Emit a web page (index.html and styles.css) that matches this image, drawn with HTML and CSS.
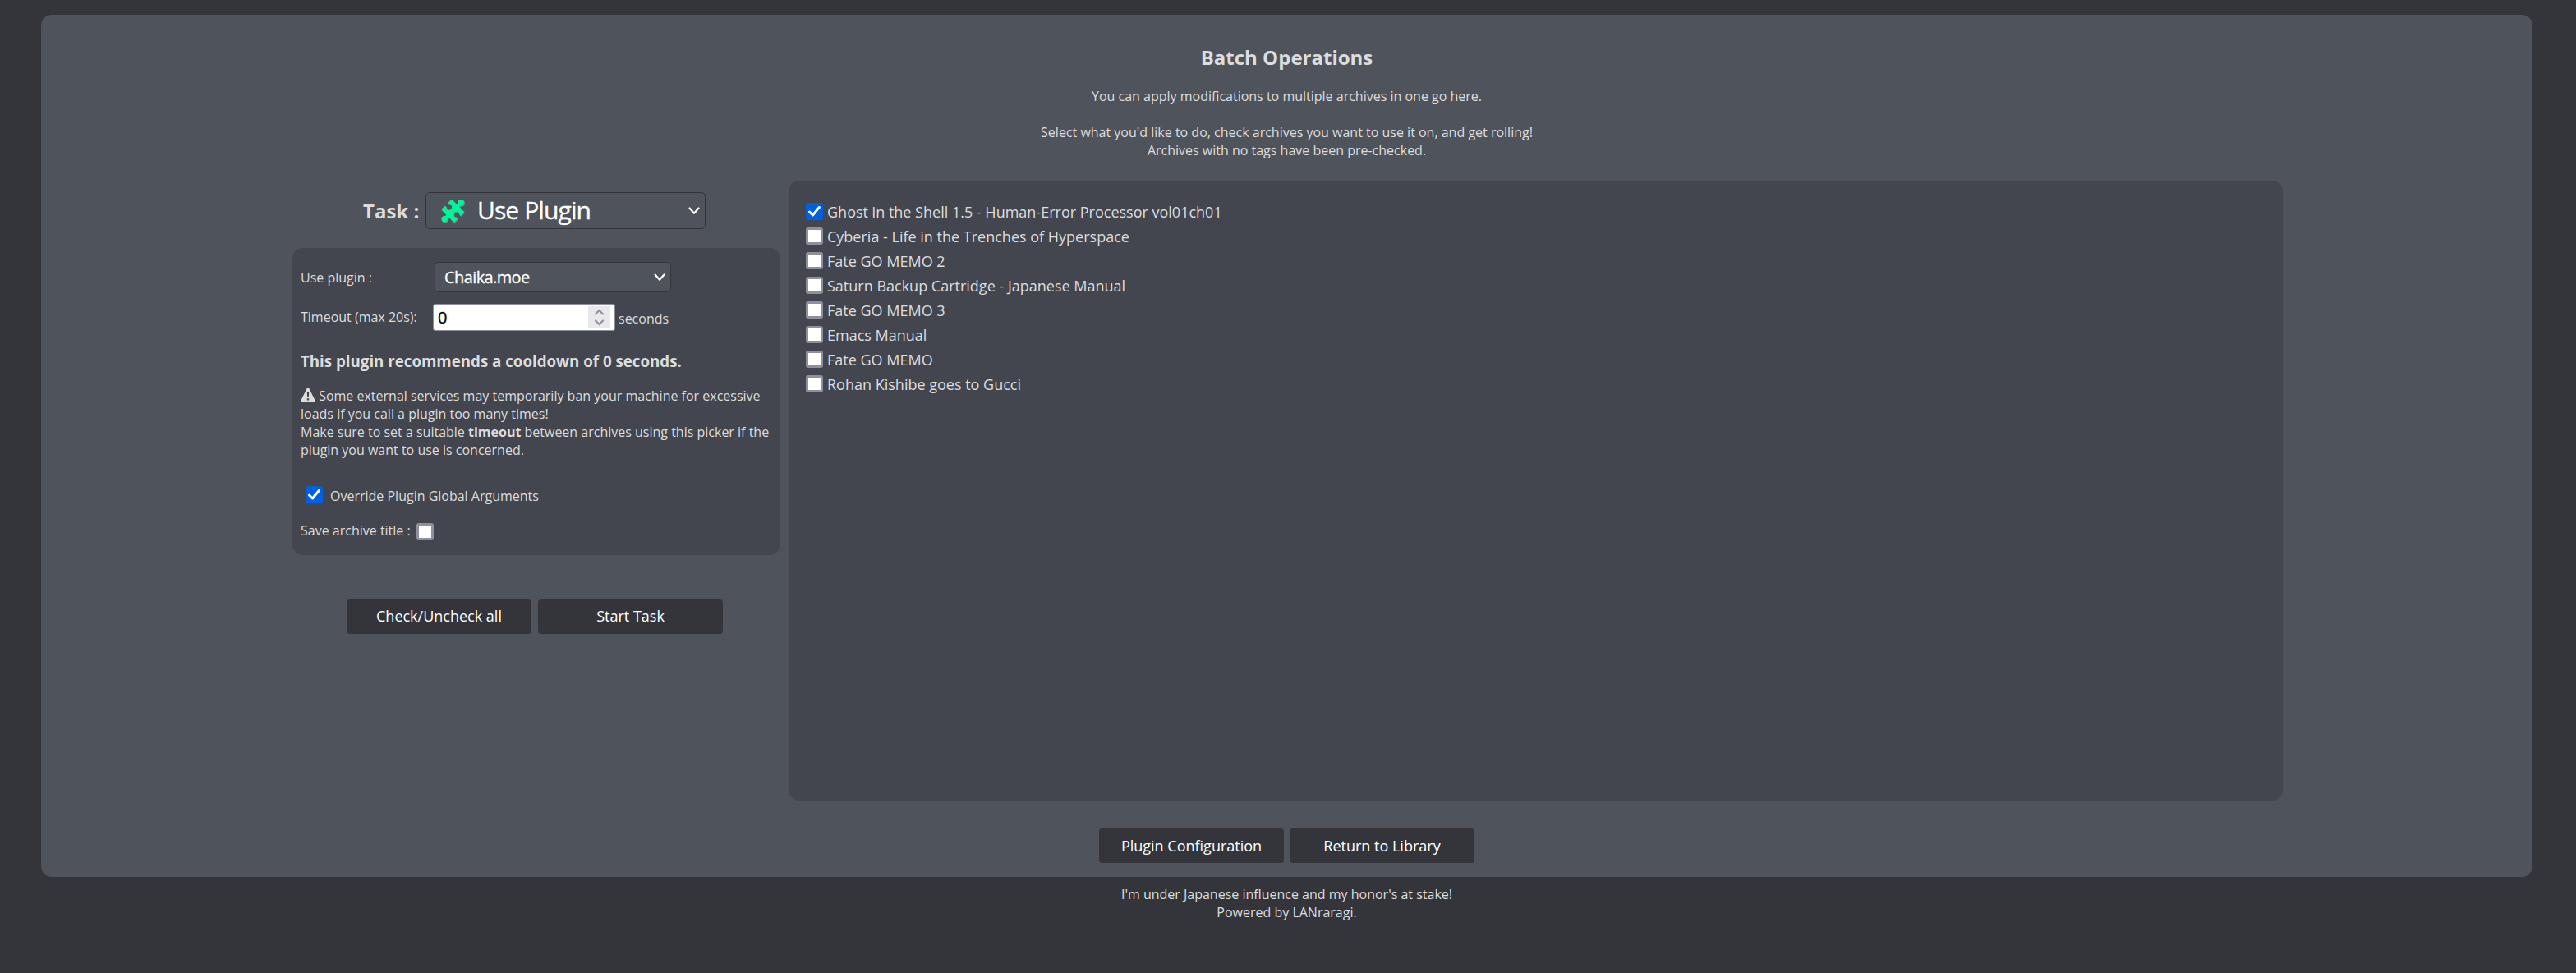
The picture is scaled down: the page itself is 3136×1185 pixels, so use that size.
FILE: index.html
```html
<!DOCTYPE html>
<html lang="en">
<head>
<meta charset="utf-8">
<title>LANraragi - Batch Operations</title>
<link rel="stylesheet" href="styles.css">
</head>
<body>
<main class="panel">
  <h2 class="title">Batch Operations</h2>
  <p class="intro">You can apply modifications to multiple archives in one go here.<br><br>Select what you'd like to do, check archives you want to use it on, and get rolling!<br>Archives with no tags have been pre-checked.</p>

  <div class="columns">
    <section class="left">
      <div class="task">
        <span class="task-label">Task :</span>
        <div class="select select-task">
          <svg class="puzzle" viewBox="0 0 30 30"><path transform="translate(13.8 .6) rotate(45)" d="M1 0H8.8Q9.6-1.4 8.4-2.6A3.7 3.7 0 1 1 13.6-2.6Q12.4-1.4 13.2 0H21L22 1V6.5Q20.6 7.3 19.4 6.3A3.4 3.4 0 1 0 19.4 11.7Q20.6 10.7 22 11.5V17L21 18H13.2Q12.4 19.4 13.6 20.6A3.7 3.7 0 1 1 8.4 20.6Q9.6 19.4 8.8 18H1L0 17V11.5Q1.4 10.7 2.6 11.7A3.4 3.4 0 1 0 2.6 6.3Q1.4 7.3 0 6.5V1Z"/></svg>
          <span class="select-text">Use Plugin</span>
          <svg class="chevron" viewBox="0 0 14 10"><path d="M1.500 1.500 7 7.700l5.500-6.200"/></svg>
        </div>
      </div>

      <div class="options">
        <div class="row row-plugin">
          <span class="label">Use plugin :</span>
          <div class="select select-plugin">
            <span class="select-text">Chaika.moe</span>
            <svg class="chevron" viewBox="0 0 14 10"><path d="M1.500 1.500 7 7.700l5.500-6.200"/></svg>
          </div>
        </div>
        <div class="row row-timeout">
          <span class="label">Timeout (max 20s):</span>
          <div class="number">
            <span class="value">0</span>
            <svg class="spinner" viewBox="0 0 27 27"><path d="M9 9.500 13.500 5 18 9.500M9 17.500l4.500 4.500 4.500-4.500"/></svg>
          </div>
          <span class="unit">seconds</span>
        </div>
        <h3 class="cooldown">This plugin recommends a cooldown of 0 seconds.</h3>
        <p class="warning"><svg class="alert" viewBox="0 0 18 18"><path fill-rule="evenodd" d="M9 0Q9.800 0 10.300.900L17.700 15.800Q18.500 18 16.600 18H1.400Q-.500 18 .300 15.800L7.700.900Q8.200 0 9 0ZM7.800 6 8.200 11.800H9.800L10.200 6ZM7.800 13.200V15.600H10.200V13.200Z"/></svg> Some external services may temporarily ban your machine for excessive<br>loads if you call a plugin too many times!<br>Make sure to set a suitable <b>timeout</b> between archives using this picker if the<br>plugin you want to use is concerned.</p>
        <div class="row-override"><span class="check checked"><svg viewBox="0 0 21 21"><path d="M4.500 11 8.500 15 16.300 5.500"/></svg></span><span>Override Plugin Global Arguments</span></div>
        <div class="row-save"><span>Save archive title :</span><span class="check"></span></div>
      </div>

      <div class="buttons buttons-left">
        <button class="btn">Check/Uncheck all</button>
        <button class="btn">Start Task</button>
      </div>
    </section>

    <ul class="archives">
      <li><span class="check checked"><svg viewBox="0 0 21 21"><path d="M4.500 11 8.500 15 16.300 5.500"/></svg></span>Ghost in the Shell 1.5 - Human-Error Processor vol01ch01</li>
      <li><span class="check"></span>Cyberia - Life in the Trenches of Hyperspace</li>
      <li><span class="check"></span>Fate GO MEMO 2</li>
      <li><span class="check"></span>Saturn Backup Cartridge - Japanese Manual</li>
      <li><span class="check"></span>Fate GO MEMO 3</li>
      <li><span class="check"></span>Emacs Manual</li>
      <li><span class="check"></span>Fate GO MEMO</li>
      <li><span class="check"></span>Rohan Kishibe goes to Gucci</li>
    </ul>
  </div>

  <div class="buttons buttons-bottom">
    <button class="btn">Plugin Configuration</button>
    <button class="btn">Return to Library</button>
  </div>
</main>
<footer class="footer">I'm under Japanese influence and my honor's at stake!<br>Powered by LANraragi.</footer>
</body>
</html>
```

FILE: styles.css
```css
* { box-sizing: border-box; }

body {
  margin: 0;
  padding: 18px 53px 0 50px;
  min-height: 1185px;
  background: #34353b;
  color: #dddddd;
  font: 16px/22px "Open Sans", sans-serif;
}

.panel {
  height: 1050px;
  padding-top: 35px;
  border-radius: 13px;
  background: #4f535b;
}

.title {
  margin: 0 0 20px;
  font-size: 24px;
  line-height: 33px;
  text-align: center;
}

.intro { margin: 0 0 26px; text-align: center; }

.columns {
  display: grid;
  grid-template-columns: 594px 1819px;
  column-gap: 10px;
  height: 755px;
  margin-left: 306px;
}

.left { padding-top: 14px; }

.task {
  display: flex;
  align-items: center;
  height: 45px;
  margin-bottom: 23px;
  padding-left: 86px;
}

.task-label {
  width: 76px;
  font-size: 24px;
  font-weight: bold;
  line-height: 33px;
}

.select {
  display: flex;
  align-items: center;
  border: 1px solid #34353b;
  border-radius: 5px;
  background: #4f535b;
  color: #ffffff;
}

.select-text {
  flex: 1;
  -webkit-text-stroke: 0.3px currentColor;
}

.select-task {
  width: 341px;
  height: 45px;
  padding: 0 6px 0 17px;
  font-size: 30px;
  letter-spacing: -0.9px;
}

.select-task .select-text { padding-bottom: 1px; }

.puzzle {
  width: 30px;
  height: 30px;
  margin-right: 15px;
  overflow: visible;
  fill: #00f59b;
  filter: drop-shadow(1px 1px 0 #8d8182);
}

.chevron {
  width: 14px;
  height: 10px;
  fill: none;
  stroke: #ffffff;
  stroke-width: 2.2;
  stroke-linecap: round;
  stroke-linejoin: round;
}

.options {
  height: 374px;
  padding: 17px 10px 0;
  border-radius: 13px;
  background: #43464e;
}

.row { display: flex; align-items: center; }
.row-plugin { height: 37px; margin-bottom: 14px; }
.row-plugin .label { width: 163px; }
.row-timeout { height: 33px; }
.row-timeout .label { width: 161px; padding-bottom: 1px; }

.select-plugin {
  width: 288px;
  height: 37px;
  padding: 0 6px 0 11px;
  font-size: 20px;
  letter-spacing: -0.6px;
}

.number {
  display: flex;
  align-items: center;
  justify-content: space-between;
  width: 222px;
  height: 33px;
  padding: 0 5px;
  border: 1px solid #8f8f9d;
  border-radius: 3px;
  background: #ffffff;
  color: #000000;
  font-size: 20px;
}

.value { -webkit-text-stroke: 0.3px currentColor; }

.spinner {
  width: 27px;
  height: 27px;
  background: #e9e9ed;
  fill: none;
  stroke: #8f8f9d;
  stroke-width: 2.2;
  stroke-linecap: round;
}

.unit { padding: 3px 0 0 4px; }

.cooldown {
  margin: 24px 0 18px;
  font-size: 18.72px;
  line-height: 26px;
}

.warning { margin: 0; white-space: nowrap; }

.alert {
  width: 18px;
  height: 18px;
  vertical-align: -2px;
  fill: #dddddd;
}

.check {
  flex: none;
  width: 21px;
  height: 21px;
  border: 3px solid #8f8f9d;
  border-radius: 3px;
  background: #ffffff;
}

.checked { border: 0; background: #0060df; }

.check svg {
  display: block;
  fill: none;
  stroke: #ffffff;
  stroke-width: 3;
  stroke-linecap: round;
  stroke-linejoin: round;
}

.row-override {
  display: flex;
  gap: 9px;
  height: 22px;
  margin-top: 34px;
  padding-left: 6px;
}

.row-override .check { margin-top: -1px; }

.row-save { display: flex; gap: 7px; margin-top: 20px; }
.row-save .check { margin-top: 2px; }

.buttons { display: flex; gap: 7px; }
.buttons-left { gap: 8px; padding: 54px 0 0 66px; }
.buttons-bottom { justify-content: center; margin-top: 34px; }

.btn {
  width: 225px;
  height: 42px;
  padding: 0;
  border: 0;
  border-radius: 4px;
  background: #34353b;
  color: #ffffff;
  font: 18px/25px "Open Sans", sans-serif;
}

.buttons-left .btn { padding-bottom: 1px; }

.archives {
  margin: 0;
  padding: 23px 21px 0;
  border-radius: 13px;
  background: #43464e;
  list-style: none;
  font-size: 18px;
  line-height: 30px;
}

.archives li { display: flex; gap: 5px; }
.archives .check { margin-top: 4px; }

.footer { margin-top: 10px; text-align: center; }
```
